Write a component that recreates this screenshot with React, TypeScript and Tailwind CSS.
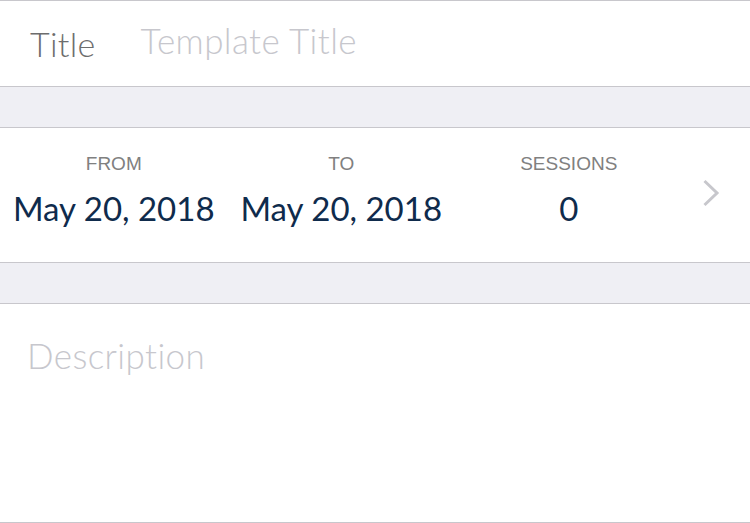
import React from "react";

export default function App() {
  return (
    <div className="w-[750px] h-[523px] bg-white overflow-hidden">
      <div className="border-t border-[#c8c7cc] h-[86px] flex items-center px-[30px] gap-[45px]">
        <span className="text-[#6d6d6d] text-[34px] font-light mt-[1px] leading-none tracking-[0.3px]" style={{ fontFamily: "Lato, sans-serif" }}>Title</span>
        <span className="text-[#c7c7cd] text-[35px] font-light leading-none tracking-[0.4px] mt-[-7px]" style={{ fontFamily: "Lato, sans-serif" }}>Template Title</span>
      </div>
      <div className="h-[42px] bg-[#efeff4] border-y border-[#c8c7cc]" />
      <div className="h-[134px] flex items-stretch">
        {[
          ["FROM", "May 20, 2018"],
          ["TO", "May 20, 2018"],
          ["SESSIONS", "0"],
        ].map(([label, value]) => (
          <div key={label} className="w-[227.5px] flex flex-col items-center pt-[26px]">
            <span className="text-[#808080] text-[19px] leading-none" style={{ fontFamily: "'Liberation Sans', Arial, sans-serif" }}>{label}</span>
            <span className="text-[#0f2b4c] text-[33px] leading-none mt-[19px]" style={{ fontFamily: "Lato, sans-serif" }}>{value}</span>
          </div>
        ))}
        <div className="flex-1 flex items-center pl-[19px] pb-[4px]">
          <svg width="18" height="28" viewBox="0 0 18 28" fill="none">
            <path d="M2.5 2 L15 14 L2.5 26" stroke="#c7c7cc" strokeWidth="3" />
          </svg>
        </div>
      </div>
      <div className="h-[42px] bg-[#efeff4] border-y border-[#c8c7cc]" />
      <div className="h-[219px] border-b border-[#c8c7cc] px-[27px] pt-[34px]">
        <span className="text-[#c7c7cd] text-[35px] font-light leading-none tracking-[0.4px]" style={{ fontFamily: "Lato, sans-serif" }}>Description</span>
      </div>
    </div>
  );
}
